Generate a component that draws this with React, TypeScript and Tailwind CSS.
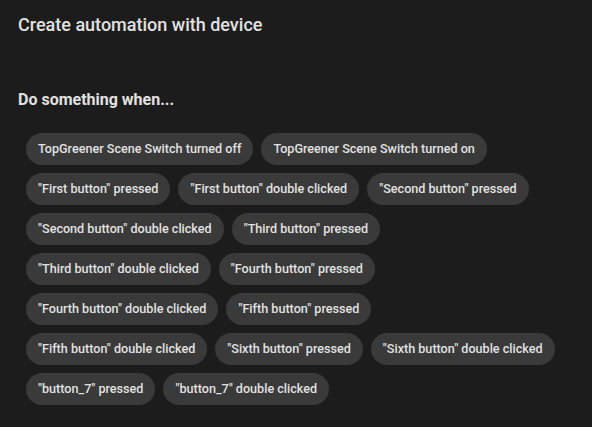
const triggers = [
  "TopGreener Scene Switch turned off",
  "TopGreener Scene Switch turned on",
  "\"First button\" pressed",
  "\"First button\" double clicked",
  "\"Second button\" pressed",
  "\"Second button\" double clicked",
  "\"Third button\" pressed",
  "\"Third button\" double clicked",
  "\"Fourth button\" pressed",
  "\"Fourth button\" double clicked",
  "\"Fifth button\" pressed",
  "\"Fifth button\" double clicked",
  "\"Sixth button\" pressed",
  "\"Sixth button\" double clicked",
  "\"button_7\" pressed",
  "\"button_7\" double clicked",
];

export default function App() {
  return (
    <div className="min-h-[427px] w-[592px] bg-[#1c1c1c] text-[#e1e1e1] font-['Roboto',sans-serif]">
      <div className="px-[18px] pt-[13px]">
        <h2 className="text-[18px] leading-6 font-medium">Create automation with device</h2>
        <h3 className="mt-[51px] text-[16px] leading-6 font-bold">Do something when...</h3>
      </div>
      <div className="flex flex-wrap gap-2 pl-[26px] pr-[34px] pt-[21px]">
        {triggers.map((t) => (
          <button
            key={t}
            className="h-8 rounded-full bg-[#3a3a3a] px-3 text-[12.6px] font-medium text-[#e1e1e1]"
          >
            {t}
          </button>
        ))}
      </div>
    </div>
  );
}
